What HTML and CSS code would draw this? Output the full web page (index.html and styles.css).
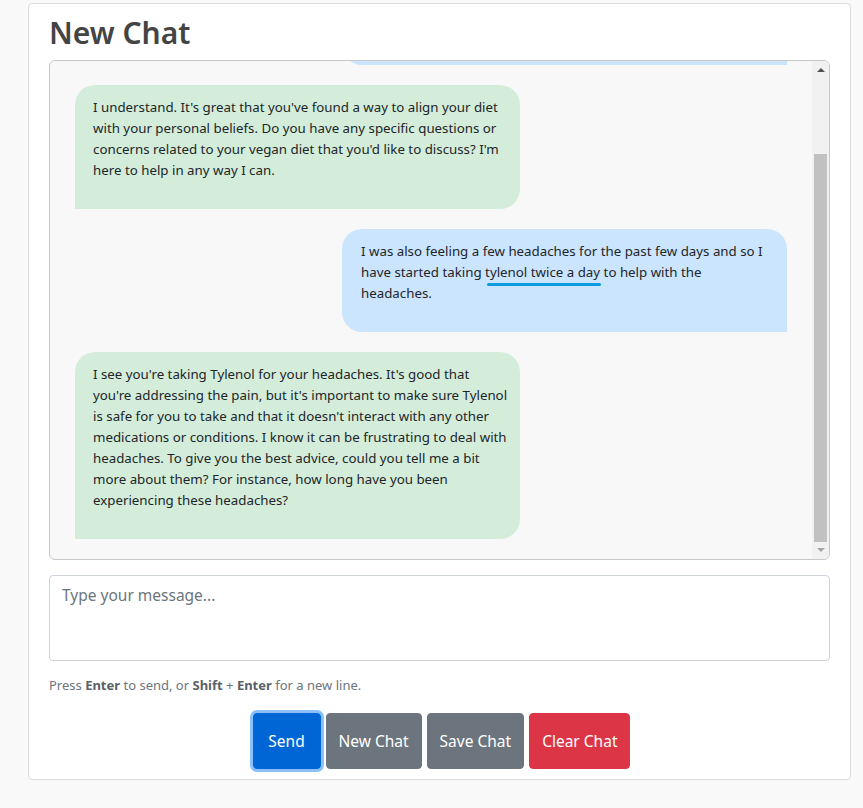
FILE: index.html
```html
<!DOCTYPE html>
<html lang="en">
<head>
<meta charset="utf-8">
<title>New Chat</title>
<link rel="stylesheet" href="styles.css">
</head>
<body>
<div class="card">
  <h2 class="title">New Chat</h2>
  <div class="chat-frame">
    <div class="chat-box">
      <div class="messages">
        <div class="msg user"><p>I have been following a vegan diet for a few years now because I believe<br>it is the right thing to do for animals and the planet.</p></div>
        <div class="msg bot"><p>I understand. It's great that you've found a way to align your diet<br>with your personal beliefs. Do you have any specific questions or<br>concerns related to your vegan diet that you'd like to discuss? I'm<br>here to help in any way I can.</p></div>
        <div class="msg user"><p>I was also feeling a few headaches for the past few days and so I<br>have started taking <span class="flag">tylenol twice a day</span> to help with the<br>headaches.</p></div>
        <div class="msg bot"><p>I see you're taking Tylenol for your headaches. It's good that<br>you're addressing the pain, but it's important to make sure Tylenol<br>is safe for you to take and that it doesn't interact with any other<br>medications or conditions. I know it can be frustrating to deal with<br>headaches. To give you the best advice, could you tell me a bit<br>more about them? For instance, how long have you been<br>experiencing these headaches?</p></div>
      </div>
    </div>
    <div class="scrollbar">
      <div class="sb-btn sb-up"></div>
      <div class="sb-track"><div class="sb-thumb"></div></div>
      <div class="sb-btn sb-down"></div>
    </div>
  </div>
  <textarea class="input" rows="3" placeholder="Type your message..."></textarea>
  <div class="hint">Press <b>Enter</b> to send, or <b>Shift</b> + <b>Enter</b> for a new line.</div>
  <div class="actions">
    <button class="btn btn-primary focus">Send</button>
    <button class="btn btn-secondary">New Chat</button>
    <button class="btn btn-secondary">Save Chat</button>
    <button class="btn btn-danger">Clear Chat</button>
  </div>
</div>
</body>
</html>
```
FILE: styles.css
```css
* { box-sizing: border-box; }
html, body { height: 100%; }
body {
  margin: 0;
  background: #f9f9f9;
  font-family: "Noto Sans", "Open Sans", sans-serif;
  color: #212529;
}
.card {
  margin: 3px 12px 0 28px;
  background: #fff;
  border: 1px solid #dcdcdc;
  border-radius: 4px;
  padding: 10px 20px 10px 20px;
}
.title {
  margin: 0 0 9px 0;
  font-size: 30px;
  line-height: 37px;
  font-weight: 600;
  color: #444;
}
.chat-frame {
  display: flex;
  height: 500px;
  background: #f8f8f8;
  border: 1px solid #c8c8c8;
  border-radius: 6px;
  overflow: hidden;
}
.chat-box {
  flex: 1;
  min-width: 0;
  display: flex;
  flex-direction: column;
  justify-content: flex-end;
  overflow: hidden;
}
.messages {
  flex-shrink: 0;
  display: flex;
  flex-direction: column;
  gap: 20px;
  padding: 20px 25px;
}
.scrollbar {
  width: 17px;
  flex-shrink: 0;
  display: flex;
  flex-direction: column;
  background: #f1f1f1;
}
.sb-btn {
  height: 17px;
  display: flex;
  align-items: center;
  justify-content: center;
}
.sb-up::before {
  content: "";
  border-left: 4px solid transparent;
  border-right: 4px solid transparent;
  border-bottom: 4px solid #505050;
  margin-top: 1px;
}
.sb-down::before {
  content: "";
  border-left: 4px solid transparent;
  border-right: 4px solid transparent;
  border-top: 4px solid #a3a3a3;
  margin-top: -2px;
}
.sb-track {
  flex: 1;
  display: flex;
  flex-direction: column;
  justify-content: flex-end;
}
.sb-thumb {
  height: 388px;
  margin: 0 2px;
  background: #c1c1c1;
}
.msg {
  width: 445px;
  padding: 12px 0 12px 18px;
  font-size: 13.3px;
  line-height: 21px;
}
.user { padding-left: 19px; }
.msg p { margin: 0 0 16px 0; white-space: nowrap; }
.bot {
  align-self: flex-start;
  background: #d4edda;
  border-radius: 20px 20px 20px 0;
}
.user {
  align-self: flex-end;
  background: #cce5ff;
  border-radius: 20px 20px 0 20px;
}
.flag { position: relative; }
.flag::after {
  content: "";
  position: absolute;
  left: 2px;
  right: -1px;
  bottom: -5px;
  height: 3px;
  border-radius: 2px;
  background: #0a9ae0;
}
.input {
  display: block;
  width: 100%;
  margin-top: 15px;
  height: 86px;
  padding: 7px 12px 6px;
  font-family: inherit;
  font-size: 15.5px;
  line-height: 24px;
  color: #212529;
  border: 1px solid #ced4da;
  border-radius: 4px;
  resize: none;
  outline: none;
}
.input::placeholder { color: #6c757d; }
.hint {
  margin-top: 14px;
  font-size: 13px;
  line-height: 20px;
  color: #6c757d;
}
.hint b { color: #5a6169; font-weight: 700; }
.actions {
  display: flex;
  justify-content: center;
  gap: 5px;
  margin-top: 18px;
  padding-left: 4px;
}
.btn {
  font-family: inherit;
  font-size: 15.5px;
  line-height: 24px;
  padding: 15px 12px;
  border: 1px solid transparent;
  border-radius: 4px;
  color: #fff;
}
.btn-primary { background: #0066d6; border-color: #0066d6; min-width: 68px; }
.btn-primary.focus { box-shadow: 0 0 0 3px #8cc0fb; }
.btn-secondary { background: #6c757d; border-color: #6c757d; }
.btn-danger { background: #dc3545; border-color: #dc3545; }
```
